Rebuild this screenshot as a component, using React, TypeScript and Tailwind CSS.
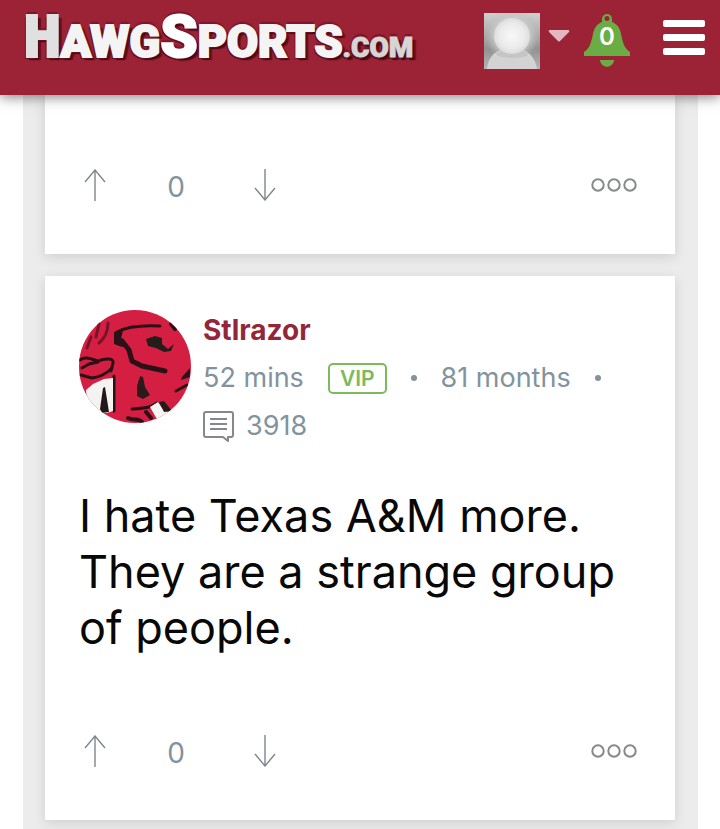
import React from "react";

function Logo() {
  return (
    <a
      href="#home"
      aria-label="HawgSports.com"
      className="flex items-baseline font-[Roboto,'Liberation_Sans',sans-serif] text-[45px] leading-[60px] font-black whitespace-nowrap text-[#f4f4f4] [-webkit-text-stroke:2px_#f4f4f4] [text-shadow:0_-3px_1px_#7d1628,-2px_2px_0_#65101e,2px_3px_1px_#4c0914,4px_3px_1px_#650f1d]"
    >
      <span className="font-['Roboto_Condensed',Roboto,sans-serif] text-[60px] text-[#e0e0e0] [-webkit-text-stroke:2px_#e0e0e0]">H</span>
      <span>AWG</span>
      <span className="text-[60px] text-white [-webkit-text-stroke:2px_white]">S</span>
      <span>PORTS</span>
      <span className="text-[28px] text-[#d6d6d6] [-webkit-text-stroke:1px_#d6d6d6]">.COM</span>
    </a>
  );
}

function UserPhoto() {
  return (
    <svg viewBox="0 0 56 56" className="size-14" aria-hidden="true">
      <defs>
        <linearGradient id="photoBack" x1="0" y1="0" x2="0" y2="1">
          <stop offset="0" stopColor="#d0d0d0" />
          <stop offset=".65" stopColor="#929292" />
          <stop offset="1" stopColor="#b5b5b5" />
        </linearGradient>
        <radialGradient id="photoLight">
          <stop offset="0" stopColor="#d8d8d8" />
          <stop offset=".7" stopColor="#c8c8c8" stopOpacity=".8" />
          <stop offset="1" stopColor="#bbb" stopOpacity="0" />
        </radialGradient>
        <radialGradient id="photoHead">
          <stop offset="0" stopColor="#f8f8f8" />
          <stop offset=".7" stopColor="#ebebeb" />
          <stop offset="1" stopColor="#dcdcdc" />
        </radialGradient>
      </defs>
      <rect width="56" height="56" fill="url(#photoBack)" />
      <circle cx="28" cy="22" r="27" fill="url(#photoLight)" />
      <path d="M3 56C4 43 13 35 28 35s23 8 25 21Z" fill="#d3d3d3" />
      <ellipse cx="28" cy="41" rx="16" ry="4" fill="#bdbdbd" opacity=".6" />
      <circle cx="28" cy="23" r="18" fill="url(#photoHead)" />
    </svg>
  );
}

function HogPortrait() {
  return (
    <svg viewBox="0 0 112 113" className="h-[113px] w-28 rounded-full" role="img" aria-label="Stlrazor">
      <rect width="112" height="113" fill="#d51f42" />
      <g fill="none" stroke="#2b1015" strokeLinecap="round" strokeLinejoin="round">
        <path d="M29 13C29 20 26 28 20 33M20 14 17 27M12 27 8 38" strokeWidth="3" stroke="#791329" />
        <path d="M38 22C47 17 61 15 81 16" strokeWidth="3" />
        <path d="M43 31 50 40 53 51 63 56 86 61" strokeWidth="5" />
        <path d="M1 50C6 46 12 49 19 51C27 48 35 48 34 53L32 61M3 58 10 54 19 52" strokeWidth="3" />
        <path d="M2 65 13 68C22 67 29 62 33 58" strokeWidth="3" />
        <path d="M35 66V101" strokeWidth="3" />
        <path d="M53 99C64 98 72 98 78 93M97 81 108 75" strokeWidth="3" />
        <path d="M92 14 96 19M49 108C55 111 60 108 63 112M67 102 72 108" strokeWidth="4" />
      </g>
      <path d="M35 22 44 20 42 29 48 34 43 37 35 34Z" fill="#291217" />
      <path d="m67 29 9-3 7 2v6l6 5 6-5-3 7-7 1-8-4-8-2Z" fill="#231d1c" />
      <path d="m61 66 3 1 2 10 5 8-7 4-6-3v-10Z" fill="#291a1b" />
      <path d="M103 67 111 58v9l-9 3Z" fill="#28161a" />
      <path d="M7 80 14 74 25 69 34 68V101L28 103 21 103 8 91Z" fill="#f4f3f1" />
      <path d="M24 78 26 77 30 102 23 103 21 99Z" fill="#251719" />
      <path d="m71 97 8-5 4 6 8 5-12 8Z" fill="#f6f5f2" />
      <path d="m80 92 5-1 8 10-8 1Z" fill="#251a19" />
    </svg>
  );
}

function Bell() {
  return (
    <svg viewBox="0 0 46 55" className="h-[55px] w-[46px]" fill="#6bad45" aria-hidden="true">
      <path fillRule="evenodd" d="M18 6a5 5 0 1 1 10 0v3c5 2 8 6 9 12 2 10 4 15 9 18v4H0v-4c5-3 7-8 9-18 1-6 4-10 9-12Zm5-3a2.5 2.5 0 1 0 0 5 2.5 2.5 0 0 0 0-5Z" />
      <path d="M16 47h14c-1 9-13 9-14 0Z" />
    </svg>
  );
}

function Arrow({ down = false }: { down?: boolean }) {
  return (
    <svg viewBox="0 0 22 32" className="h-8 w-[22px]" fill="none" stroke="#7f878b" strokeWidth="1.4" aria-hidden="true">
      <path d={down ? "M11 0v31M1 19l10 12 10-12" : "M11 32V1M1 13 11 1l10 12"} />
    </svg>
  );
}

function Actions() {
  return (
    <div className="flex items-center justify-between pr-1 pl-[5px]">
      <div className="flex items-center">
        <button type="button" aria-label="Vote up"><Arrow /></button>
        <span className="w-[148px] pt-1 pr-2 text-center text-[28px] leading-8 text-[#82939d]">0</span>
        <button type="button" aria-label="Vote down"><Arrow down /></button>
      </div>
      <button type="button" aria-label="More options">
        <svg viewBox="0 0 46 14" className="h-3.5 w-[46px]" fill="none" stroke="#85898b" strokeWidth="2" aria-hidden="true">
          <circle cx="7" cy="7" r="5.7" />
          <circle cx="23" cy="7" r="5.7" />
          <circle cx="39" cy="7" r="5.7" />
        </svg>
      </button>
    </div>
  );
}

export default function App() {
  return (
    <div className="min-h-screen overflow-x-hidden bg-white font-[Inter,'Noto_Sans',sans-serif]">
      <header className="relative z-10 flex h-[95px] items-start justify-between bg-[#9b2335] pr-[15px] pl-6 shadow-[0_2px_12px_rgba(0,0,0,0.5)]">
        <div className="pt-[7px]"><Logo /></div>
        <div className="flex pt-[13px]">
          <button type="button" aria-label="Account" className="flex items-start">
            <UserPhoto />
            <svg viewBox="0 0 22 13" className="mt-4 ml-2 h-[13px] w-[22px]" fill="#e4b6c0" aria-hidden="true">
              <path d="M2 1h18q2 0 1 2l-9 9q-1 1-2 0L1 3q-1-2 1-2Z" />
            </svg>
          </button>
          <button type="button" aria-label="Notifications" className="relative ml-3.5 self-start">
            <Bell />
            <span className="absolute inset-x-0 top-2 text-center text-2xl leading-8 font-semibold text-white">0</span>
          </button>
          <button type="button" aria-label="Menu" className="ml-[33px] flex w-[42px] flex-col gap-[7px] pt-[7px]">
            <span className="h-[7px] w-full rounded-xs bg-white" />
            <span className="h-[7px] w-full rounded-xs bg-white" />
            <span className="h-[7px] w-full rounded-xs bg-white" />
          </button>
        </div>
      </header>
      <main className="mr-[22px] ml-[23px] flex flex-col gap-[22px] bg-[#ececec] pr-[23px] pb-[9px] pl-[22px]">
        <article className="bg-white px-[34px] pt-[72px] pb-[51px] shadow-[0_3px_12px_rgba(0,0,0,0.13)]">
          <Actions />
        </article>
        <article className="bg-white px-[34px] pt-[34px] pb-[51px] shadow-[0_3px_12px_rgba(0,0,0,0.13)]">
          <div className="flex items-start gap-3">
            <HogPortrait />
            <div className="text-[27px] leading-12 text-[#82939d]">
              <h2 className="text-[28px] leading-10 font-bold text-[#932638]">Stlrazor</h2>
              <div className="flex items-center pt-1">
                <span>52 mins</span>
                <span className="ml-6 h-[31px] rounded-[5px] border-2 border-[#7dba5e] px-2.5 text-[21px] leading-[27px] font-semibold text-[#7dba5e]">VIP</span>
                <span className="mx-6 size-1.5 rounded-full bg-[#82939d]" />
                <span>81 months</span>
                <span className="ml-6 size-1.5 rounded-full bg-[#82939d]" />
              </div>
              <div className="flex items-center gap-3">
                <svg viewBox="0 0 31 31" className="size-[31px]" fill="none" stroke="#85898b" strokeWidth="2" strokeLinejoin="round" aria-hidden="true">
                  <path d="M3 1h25q2 0 2 2v21q0 2-2 2h-3v4l-5-4H3q-2 0-2-2V3q0-2 2-2ZM7 8h17M7 13h17M7 18h17" />
                </svg>
                <span>3918</span>
              </div>
            </div>
          </div>
          <p className="pt-[38px] text-[45px] leading-14 text-[#080808]">I hate Texas A&amp;M more. They are a strange group of people.</p>
          <div className="pt-[77px]"><Actions /></div>
        </article>
      </main>
    </div>
  );
}
